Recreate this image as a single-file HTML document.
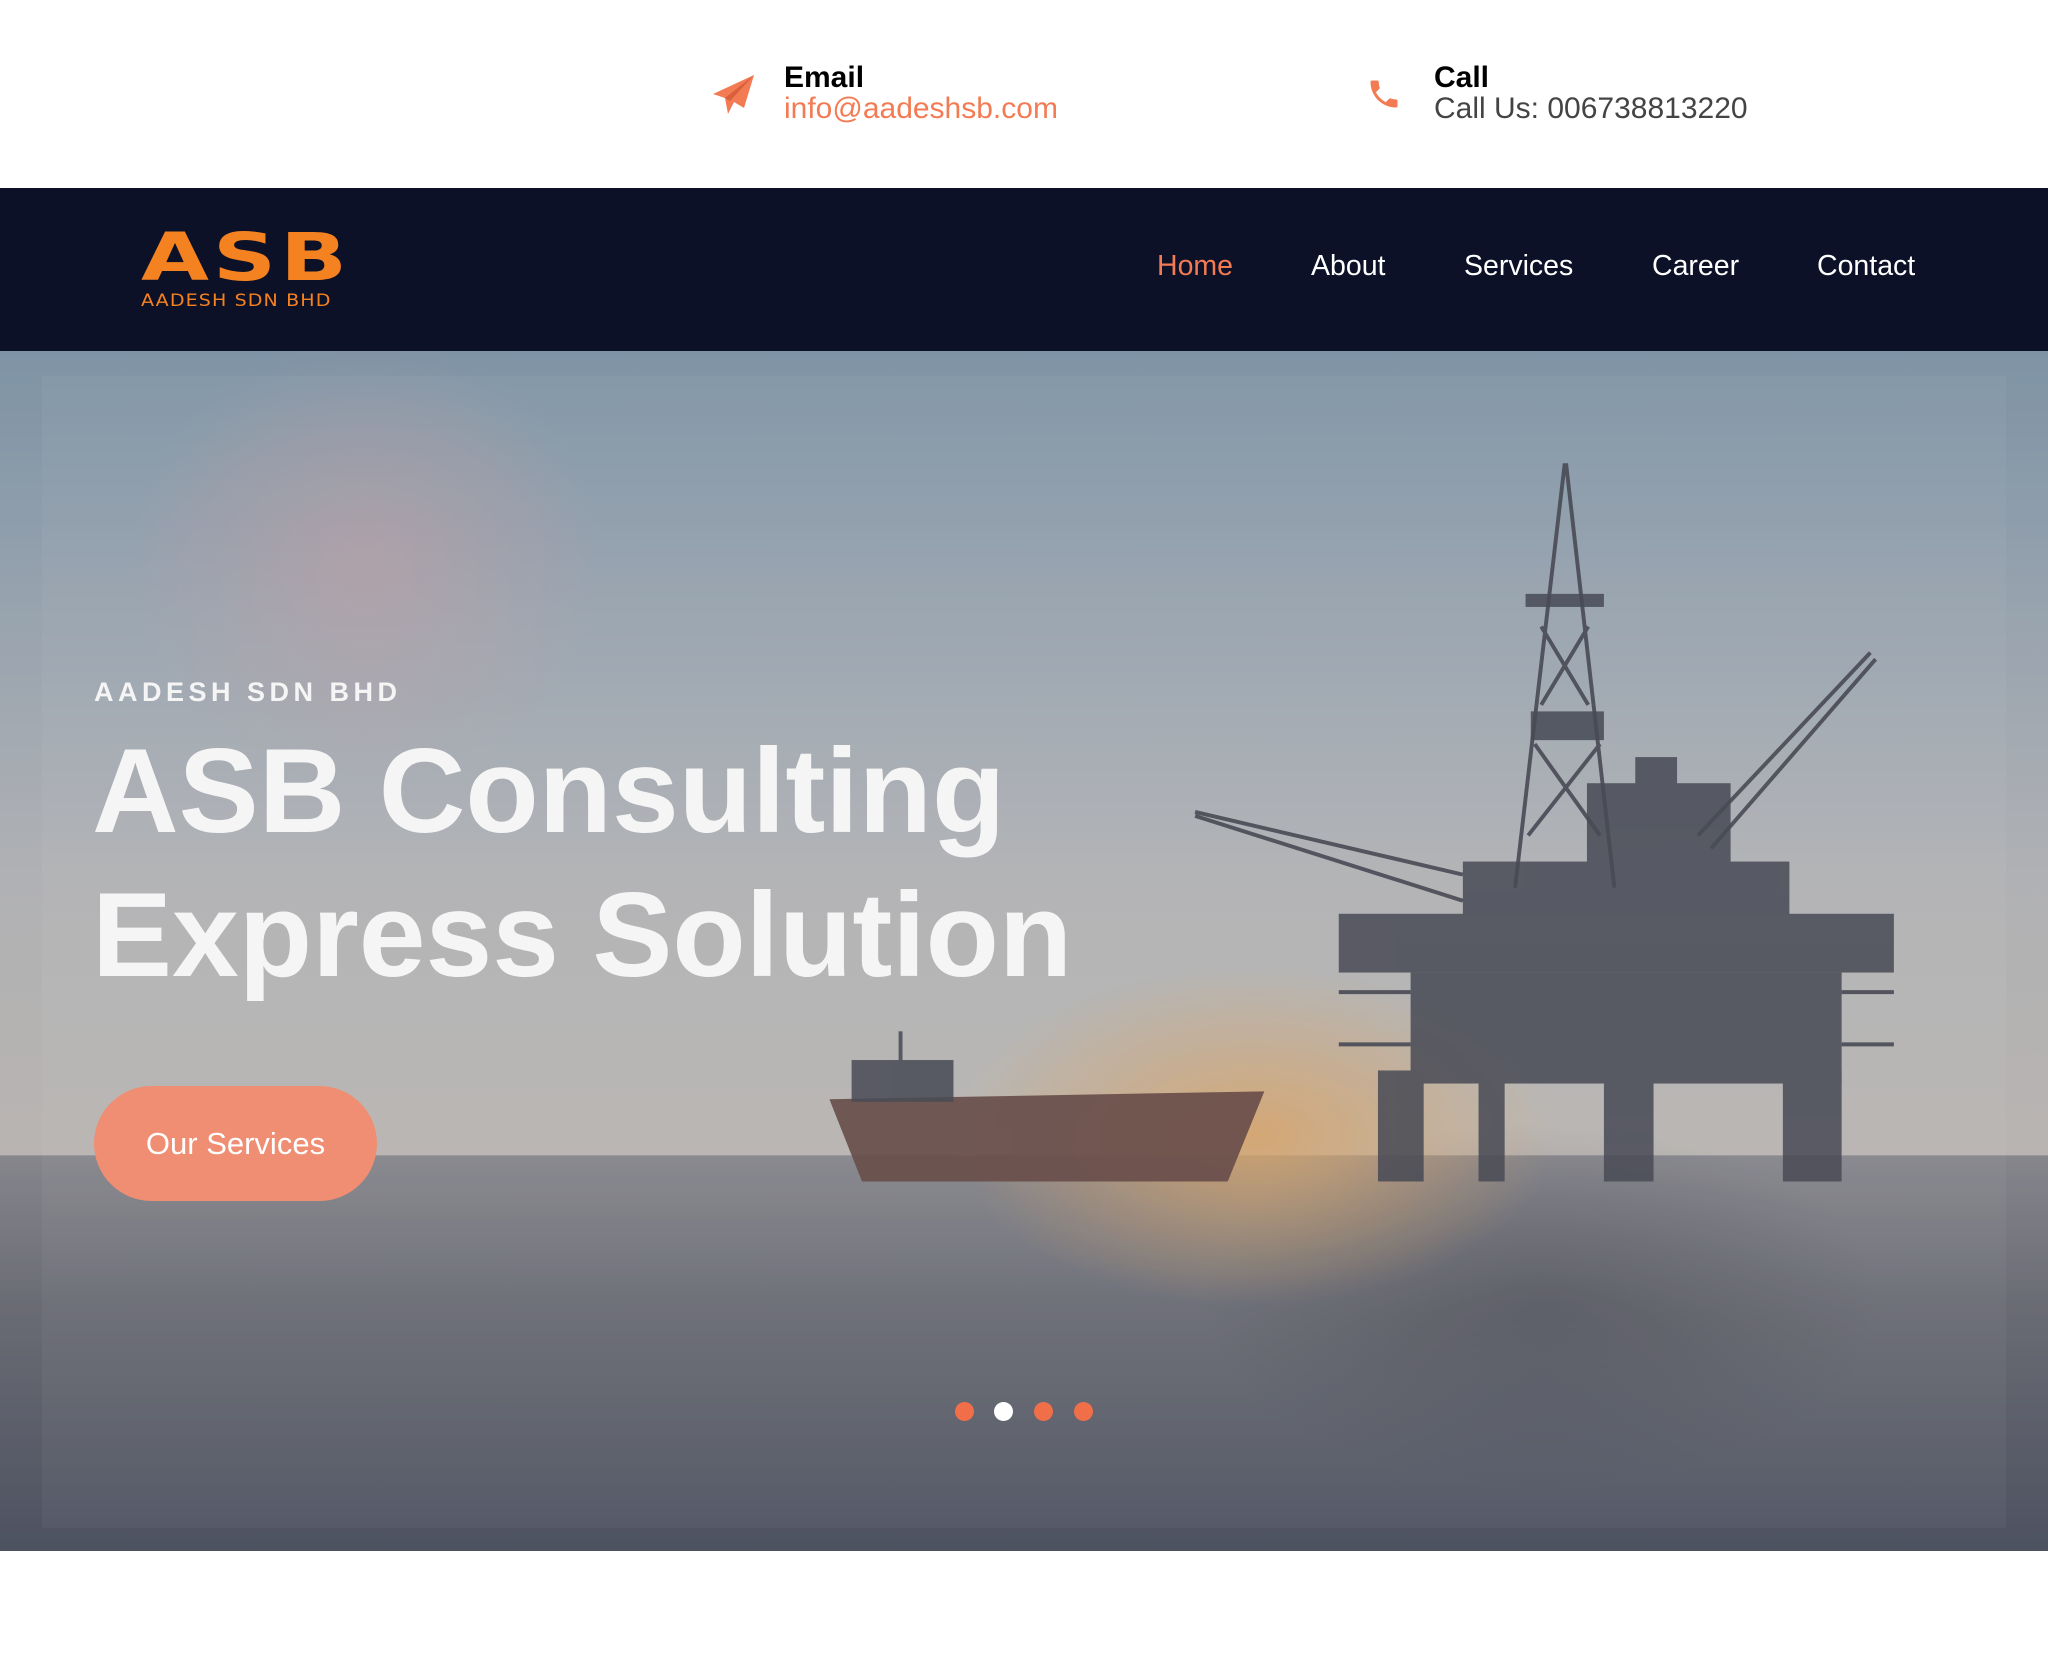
<!DOCTYPE html>
<html><head><meta charset="utf-8"><style>
*{margin:0;padding:0;box-sizing:border-box}
body{width:2048px;height:1664px;background:#fff;font-family:"Liberation Sans",sans-serif;position:relative;overflow:hidden}
.top{position:absolute;left:0;top:0;width:2048px;height:188px;background:#fff}
.ct{position:absolute;font-size:30px;line-height:31px}
.ct b{display:block;color:#000;font-weight:bold}
nav{position:absolute;left:0;top:188px;width:2048px;height:164px;background:#0c1128}
nav a{position:absolute;color:#fff;font-size:28.5px;text-decoration:none}
.hero{position:absolute;left:0;top:351px;width:2048px;height:1200px;overflow:hidden}
.t{position:absolute;color:#f5f5f5}
</style></head><body>
<div class="top">
<svg style="position:absolute;left:712px;top:74px" width="44" height="42" viewBox="0 0 44 42"><path d="M42 1 L1 20 L13 24 L16 40 L22 28 L32 34 Z" fill="#f37b54"/><path d="M13 24 L42 1 L18 27 Z" fill="#d9603c"/></svg>
<div class="ct" style="left:784px;top:62px"><b>Email</b><span style="color:#f37b54">info@aadeshsb.com</span></div>
<svg style="position:absolute;left:1366px;top:76px" width="36" height="36" viewBox="0 0 24 24"><path d="M6.6 10.8c1.4 2.8 3.8 5.1 6.6 6.6l2.2-2.2c.3-.3.7-.4 1-.2 1.1.4 2.3.6 3.6.6.6 0 1 .4 1 1V20c0 .6-.4 1-1 1C10.6 21 3 13.4 3 4c0-.6.4-1 1-1h3.5c.6 0 1 .4 1 1 0 1.3.2 2.5.6 3.6.1.3 0 .7-.2 1z" fill="#f37b54"/></svg>
<div class="ct" style="left:1434px;top:62px"><b>Call</b><span style="color:#444">Call Us: 006738813220</span></div>
</div>
<nav>
<div style="position:absolute;left:141px;top:42px;color:#f58220;font-weight:bold;font-family:'DejaVu Sans',sans-serif">
<div style="font-size:66px;line-height:56px;letter-spacing:3px;transform:scaleX(1.33);transform-origin:left;white-space:nowrap">ASB</div>
<div style="font-size:17px;letter-spacing:1px;margin-top:5px;font-weight:normal;transform:scaleX(1.12);transform-origin:left;white-space:nowrap">AADESH SDN BHD</div>
</div>
<a style="left:1157px;top:62px;color:#f37b54">Home</a>
<a style="left:1311px;top:62px">About</a>
<a style="left:1464px;top:62px">Services</a>
<a style="left:1652px;top:62px">Career</a>
<a style="left:1817px;top:62px">Contact</a>
</nav>
<div class="hero">
<svg width="2048" height="1200" viewBox="0 269 1568 919" preserveAspectRatio="none" style="position:absolute;left:0;top:0">
<defs>
<linearGradient id="sky" x1="0" y1="0" x2="0" y2="1"><stop offset="0" stop-color="#8aa2b4"/><stop offset=".35" stop-color="#aab6c0"/><stop offset=".65" stop-color="#c3c4c5"/><stop offset="1" stop-color="#cdc8c2"/></linearGradient>
<linearGradient id="sea" x1="0" y1="0" x2="0" y2="1"><stop offset="0" stop-color="#939398"/><stop offset=".4" stop-color="#72747c"/><stop offset="1" stop-color="#535866"/></linearGradient>
<radialGradient id="sun" cx=".5" cy=".5" r=".5"><stop offset="0" stop-color="#f0b36a" stop-opacity=".85"/><stop offset="1" stop-color="#f0b36a" stop-opacity="0"/></radialGradient>
<radialGradient id="pink" cx=".5" cy=".5" r=".5"><stop offset="0" stop-color="#d7aeb0" stop-opacity=".55"/><stop offset="1" stop-color="#d7aeb0" stop-opacity="0"/></radialGradient>
<radialGradient id="refl" cx=".5" cy=".5" r=".5"><stop offset="0" stop-color="#3a3c45" stop-opacity=".35"/><stop offset="1" stop-color="#3a3c45" stop-opacity="0"/></radialGradient>
</defs>
<rect x="0" y="269" width="1568" height="617" fill="url(#sky)"/>
<rect x="0" y="885" width="1568" height="303" fill="url(#sea)"/>
<ellipse cx="280" cy="430" rx="180" ry="170" fill="url(#pink)"/>
<ellipse cx="1180" cy="1000" rx="260" ry="140" fill="url(#refl)"/>
<ellipse cx="960" cy="870" rx="230" ry="130" fill="url(#sun)"/>
<g fill="#6a4a44" opacity=".9"><polygon points="635,842 968,836 940,905 660,905"/></g>
<g fill="#454852" opacity=".85">
<rect x="652" y="812" width="78" height="32"/><rect x="688" y="790" width="3" height="25"/>
<rect x="1168" y="455" width="60" height="10"/><rect x="1172" y="545" width="56" height="22"/>
<rect x="1120" y="660" width="250" height="45"/><rect x="1215" y="600" width="110" height="70"/><rect x="1252" y="580" width="32" height="40"/>
<rect x="1025" y="700" width="425" height="45"/><rect x="1080" y="745" width="330" height="85"/>
<rect x="1055" y="820" width="35" height="85"/><rect x="1132" y="820" width="20" height="85"/><rect x="1228" y="820" width="38" height="85"/><rect x="1365" y="820" width="45" height="85"/>
</g>
<g stroke="#454852" stroke-width="3" fill="none" opacity=".9">
<path d="M1198,355 L1160,680 M1199,355 L1236,680 M1180,480 L1216,540 M1216,480 L1180,540 M1175,570 L1225,640 M1225,570 L1170,640"/>
<path d="M1120,690 L915,625 M1120,670 L915,622 M1300,640 L1432,500 M1310,650 L1436,505"/>
<path d="M1025,760 L1080,760 M1025,800 L1080,800 M1410,760 L1450,760 M1410,800 L1450,800"/>
</g>
</svg>
<div style="position:absolute;left:0;top:0;width:2048px;height:1200px;background:rgba(40,45,60,.12)"></div>
<div style="position:absolute;left:42px;top:25px;width:1964px;height:1152px;background:rgba(255,255,255,.04)"></div>
<div class="t" style="left:94px;top:326px;font-size:27px;font-weight:bold;letter-spacing:4.5px">AADESH SDN BHD</div>
<div class="t" style="left:92px;top:368px;font-size:120px;font-weight:bold;line-height:144px">ASB Consulting<br>Express Solution</div>
<div style="position:absolute;left:94px;top:735px;width:283px;height:115px;border-radius:58px;background:#ef8e73;color:#fff;font-size:31px;line-height:115px;text-align:center">Our Services</div>
<div style="position:absolute;top:1051px;left:955px;width:19px;height:19px;border-radius:50%;background:#f06f48"></div>
<div style="position:absolute;top:1051px;left:994px;width:19px;height:19px;border-radius:50%;background:#fff"></div>
<div style="position:absolute;top:1051px;left:1034px;width:19px;height:19px;border-radius:50%;background:#f06f48"></div>
<div style="position:absolute;top:1051px;left:1074px;width:19px;height:19px;border-radius:50%;background:#f06f48"></div>
</div>
</body></html>
